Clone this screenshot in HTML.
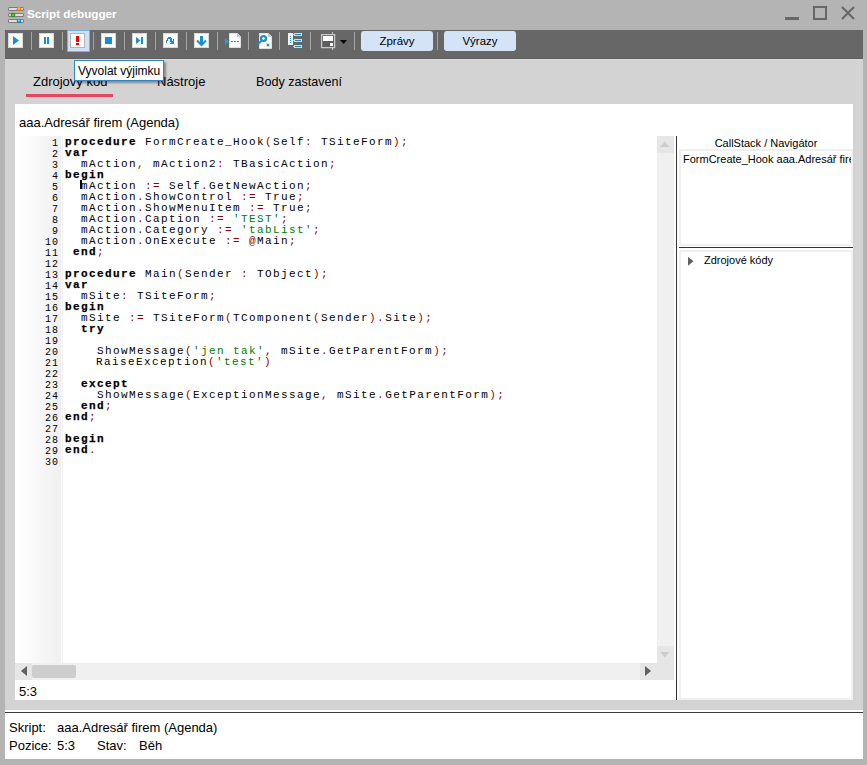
<!DOCTYPE html>
<html><head><meta charset="utf-8">
<style>
*{margin:0;padding:0;box-sizing:border-box}
html,body{width:867px;height:765px;overflow:hidden;background:#b4b4b4;font-family:"Liberation Sans",sans-serif;position:relative}
.a{position:absolute}
.title{left:27px;top:6px;font-size:11.7px;font-weight:bold;color:#fff;line-height:16px}
.tb{left:5px;top:30px;width:858px;height:28px;background:#676767}
.btn{position:absolute;top:3px;width:15px;height:15px;background:#fff;border:1px solid #d8d8d8}
.sep{position:absolute;top:2px;width:1px;height:18px;background:#9a9a9a}
.tbtn{height:20px;width:72px;background:#d4e3f5;border-radius:3px;font-size:11.5px;text-align:center;line-height:21px;color:#000}
.main{left:5px;top:59px;width:858px;height:651px;background:#d3d3d3;border-top:1px solid #d9d9d9}
.tab{position:absolute;font-size:13px;color:#000;top:14px;line-height:16px}
.panel{left:15px;top:104px;width:838px;height:596px;background:#fff}
.code{font-family:"Liberation Mono",monospace;font-size:11px;letter-spacing:1.4px;line-height:11px;white-space:pre;color:#000}
.k{font-weight:bold;-webkit-text-stroke:0.25px #000}
.p{color:#900000}
.s{color:#007a00}
.ln{font-family:"Liberation Mono",monospace;font-size:10px;letter-spacing:1px;line-height:11px;text-align:right;color:#000;white-space:pre}
.status{left:5px;top:713px;width:858px;height:46px;padding-top:1px;background:#fff;font-size:13px;color:#000}
</style></head><body>

<!-- title bar icon -->
<svg class="a" style="left:0;top:0" width="30" height="30">
  <rect x="8" y="7" width="16" height="4" rx="1.5" fill="#7c7c7c"/><rect x="9" y="8" width="14" height="2" fill="#dedede"/>
  <rect x="8" y="13" width="16" height="4" rx="1.5" fill="#7c7c7c"/><rect x="9" y="14" width="14" height="2" fill="#dedede"/>
  <rect x="8" y="19" width="16" height="4" rx="1.5" fill="#7c7c7c"/><rect x="9" y="20" width="14" height="2" fill="#dedede"/>
  <circle cx="19" cy="9" r="2.3" fill="#f07010"/><circle cx="19" cy="8.8" r="1.2" fill="#ffd000"/>
  <circle cx="13" cy="15" r="2.3" fill="#1f8f1f"/><circle cx="13" cy="15" r="1.1" fill="#9ad030"/>
  <circle cx="19" cy="21" r="2.3" fill="#1585d0"/><circle cx="19" cy="20.6" r="1" fill="#a0e0ff"/>
</svg>
<div class="a title">Script debugger</div>

<!-- window controls -->
<div class="a" style="left:785px;top:17px;width:14px;height:3px;background:#676767"></div>
<div class="a" style="left:813px;top:6px;width:14px;height:14px;border:2px solid #676767"></div>
<svg class="a" style="left:841px;top:6px" width="14" height="14" viewBox="0 0 14 14"><path d="M1 1L13 13M13 1L1 13" stroke="#676767" stroke-width="2"/></svg>

<!-- toolbar -->
<svg class="a" style="left:0;top:0" width="867" height="60" shape-rendering="crispEdges">
<rect x="5" y="30" width="858" height="29" fill="#676767"/><rect x="5" y="58" width="858" height="1" fill="#5e5e5e"/>
<rect x="31" y="32" width="1" height="18" fill="#a3a3a3"/>
<rect x="62" y="32" width="1" height="18" fill="#a3a3a3"/>
<rect x="93" y="32" width="1" height="18" fill="#a3a3a3"/>
<rect x="124" y="32" width="1" height="18" fill="#a3a3a3"/>
<rect x="155" y="32" width="1" height="18" fill="#a3a3a3"/>
<rect x="186" y="32" width="1" height="18" fill="#a3a3a3"/>
<rect x="217" y="32" width="1" height="18" fill="#a3a3a3"/>
<rect x="248" y="32" width="1" height="18" fill="#a3a3a3"/>
<rect x="279" y="32" width="1" height="18" fill="#a3a3a3"/>
<rect x="310" y="32" width="1" height="18" fill="#a3a3a3"/>
<rect x="354" y="32" width="1" height="18" fill="#a3a3a3"/>
<rect x="437" y="32" width="1" height="18" fill="#a3a3a3"/>
<rect x="8.5" y="33.5" width="14" height="14" fill="#fff" stroke="#d9d9d9"/>
<path d="M13 36L19 40.5L13 45Z" fill="#1590d0" shape-rendering="geometricPrecision"/>
<rect x="39.5" y="33.5" width="14" height="14" fill="#fff" stroke="#d9d9d9"/>
<rect x="44" y="37" width="2" height="7" fill="#1590d0"/><rect x="47" y="37" width="2" height="7" fill="#1590d0"/>
<rect x="67.5" y="30.5" width="22" height="21" fill="#cfe1f6" stroke="#79aee6"/>
<rect x="70.5" y="33.5" width="14" height="14" fill="#fff" stroke="#b4b4b4"/>
<rect x="76" y="36" width="3" height="6" fill="#f00000"/><rect x="76" y="43" width="3" height="2" fill="#f00000"/>
<rect x="101.5" y="33.5" width="14" height="14" fill="#fff" stroke="#d9d9d9"/>
<rect x="105" y="37" width="7" height="7" fill="#1590d0"/>
<rect x="132.5" y="33.5" width="14" height="14" fill="#fff" stroke="#d9d9d9"/>
<path d="M136 37L140.5 40.5L136 44Z" fill="#1590d0" shape-rendering="geometricPrecision"/><rect x="141" y="37" width="2" height="7" fill="#1590d0"/>
<rect x="163.5" y="33.5" width="14" height="14" fill="#fff" stroke="#d9d9d9"/><rect x="168" y="37" width="1" height="1" fill="#1590d0"/><rect x="169" y="37" width="1" height="1" fill="#1590d0"/><rect x="170" y="37" width="1" height="1" fill="#1590d0"/><rect x="167" y="38" width="1" height="1" fill="#1590d0"/><rect x="168" y="38" width="1" height="1" fill="#1590d0"/><rect x="169" y="38" width="1" height="1" fill="#1590d0"/><rect x="170" y="38" width="1" height="1" fill="#1590d0"/><rect x="171" y="38" width="1" height="1" fill="#1590d0"/><rect x="167" y="39" width="1" height="1" fill="#1590d0"/><rect x="170" y="39" width="1" height="1" fill="#1590d0"/><rect x="171" y="39" width="1" height="1" fill="#1590d0"/><rect x="173" y="39" width="1" height="1" fill="#1590d0"/><rect x="166" y="40" width="1" height="1" fill="#1590d0"/><rect x="167" y="40" width="1" height="1" fill="#1590d0"/><rect x="170" y="40" width="1" height="1" fill="#1590d0"/><rect x="171" y="40" width="1" height="1" fill="#1590d0"/><rect x="173" y="40" width="1" height="1" fill="#1590d0"/><rect x="166" y="41" width="1" height="1" fill="#1590d0"/><rect x="170" y="41" width="1" height="1" fill="#1590d0"/><rect x="171" y="41" width="1" height="1" fill="#1590d0"/><rect x="172" y="41" width="1" height="1" fill="#1590d0"/><rect x="173" y="41" width="1" height="1" fill="#1590d0"/><rect x="166" y="42" width="1" height="1" fill="#1590d0"/><rect x="171" y="42" width="1" height="1" fill="#1590d0"/><rect x="172" y="42" width="1" height="1" fill="#1590d0"/><rect x="173" y="42" width="1" height="1" fill="#1590d0"/><rect x="170" y="43" width="1" height="1" fill="#1590d0"/><rect x="171" y="43" width="1" height="1" fill="#1590d0"/><rect x="172" y="43" width="1" height="1" fill="#1590d0"/><rect x="173" y="43" width="1" height="1" fill="#1590d0"/>






























<rect x="194.5" y="33.5" width="14" height="14" fill="#fff" stroke="#d9d9d9"/>
<rect x="200" y="36" width="3" height="9" fill="#1590d0"/><path d="M197 40.5L201.5 45L206 40.5" stroke="#1590d0" stroke-width="2" fill="none" shape-rendering="geometricPrecision"/>
<path d="M229.5 33.5H237.5L240.5 36.5V47.5H229.5Z" fill="#fff" stroke="#e0e0e0" shape-rendering="geometricPrecision"/>
<path d="M237 33L241 37H237Z" fill="#c8c8c8" shape-rendering="geometricPrecision"/>
<path d="M225 38L229 41.5L225 45Z" fill="#18a0e0" shape-rendering="geometricPrecision"/>
<rect x="231" y="41" width="2" height="1" fill="#1590d0"/><rect x="234" y="41" width="2" height="1" fill="#1590d0"/><rect x="237" y="41" width="2" height="1" fill="#1590d0"/>
<path d="M259.5 33.5H268.5L271.5 36.5V48.5H259.5Z" fill="#fff" stroke="#e0e0e0" shape-rendering="geometricPrecision"/>
<path d="M268 33L272 37H268Z" fill="#c8c8c8" shape-rendering="geometricPrecision"/>
<circle cx="263.5" cy="38.5" r="2.4" fill="none" stroke="#1590d0" stroke-width="2.4" shape-rendering="geometricPrecision"/><path d="M263.5 37.3V39.7M262.3 38.5H264.7" stroke="#fff" stroke-width="0.9" shape-rendering="geometricPrecision"/>
<path d="M261.5 41L257.5 44.5" stroke="#1590d0" stroke-width="1.8" shape-rendering="geometricPrecision"/>
<rect x="266" y="43" width="4" height="4" fill="#ddd"/><rect x="267" y="44" width="2" height="2" fill="#1590d0"/>
<rect x="288" y="33" width="5" height="12" fill="#f4f4f4"/>
<rect x="290" y="36" width="1" height="1" fill="#1590d0"/>
<rect x="290" y="38" width="1" height="1" fill="#1590d0"/>
<rect x="290" y="40" width="1" height="1" fill="#1590d0"/>
<rect x="290" y="42" width="1" height="1" fill="#1590d0"/>
<rect x="293" y="34" width="1" height="1" fill="#ccc"/><rect x="293" y="40" width="1" height="1" fill="#ccc"/><rect x="293" y="46" width="1" height="1" fill="#ccc"/>
<rect x="294" y="33" width="8" height="3" fill="#d8d8d8"/><rect x="295" y="34" width="6" height="1" fill="#1590d0"/>
<rect x="294" y="39" width="8" height="3" fill="#d8d8d8"/><rect x="295" y="40" width="6" height="1" fill="#1590d0"/>
<rect x="294" y="45" width="8" height="3" fill="#d8d8d8"/><rect x="295" y="46" width="6" height="1" fill="#1590d0"/>
<rect x="321.6" y="34.6" width="13" height="13" fill="#5c5c5c" stroke="#c8c8c8" stroke-width="1.3" shape-rendering="geometricPrecision"/>
<rect x="323" y="36" width="10" height="5" fill="#fff"/><rect x="330" y="43" width="3" height="3" fill="#fff"/>
<rect x="332" y="32" width="1" height="2" fill="#c8c8c8"/><rect x="332" y="48" width="1" height="2" fill="#c8c8c8"/>
<path d="M340 40H347L343.5 44Z" fill="#000" shape-rendering="geometricPrecision"/>
</svg>
<div class="a tbtn" style="left:361px;top:31px">Zprávy</div>
<div class="a tbtn" style="left:444px;top:31px">Výrazy</div>
<!-- main -->
<div class="a main">
  <div class="tab" style="left:28px">Zdrojový kód</div>
  <div class="a" style="left:21px;top:34px;width:87px;height:3px;background:#e8455e"></div>
  <div class="tab" style="left:152px">Nástroje</div>
  <div class="tab" style="left:251px;font-size:12.6px">Body zastavení</div>
</div>

<div class="a panel">
  <div class="a" style="left:4px;top:11px;font-size:13px;line-height:16px">aaa.Adresář firem (Agenda)</div>
</div>


<!-- editor -->
<div class="a" style="left:16px;top:136px;width:641px;height:527px;background:#fff;overflow:hidden">
  <div class="a" style="left:0;top:0;width:45px;height:527px;background:linear-gradient(to right,#fff,#f0f0f0)"></div>
  <div class="a" style="left:45px;top:0;width:1px;height:527px;background:#fafafa"></div>
  <div class="a" style="left:46px;top:0;width:1px;height:527px;background:#f2f2f2"></div>
  <div class="a ln" style="left:0;top:2px;width:43px">1
2
3
4
5
6
7
8
9
10
11
12
13
14
15
16
17
18
19
20
21
22
23
24
25
26
27
28
29
30</div>
  <div class="a code" style="left:49px;top:1px"><span class="k">procedure</span> FormCreate_Hook<span class="p">(</span>Self<span class="p">:</span> TSiteForm<span class="p">);</span>
<span class="k">var</span>
  mAction<span class="p">,</span> mAction2<span class="p">:</span> TBasicAction<span class="p">;</span>
<span class="k">begin</span>
  mAction <span class="p">:=</span> Self<span class="p">.</span>GetNewAction<span class="p">;</span>
  mAction<span class="p">.</span>ShowControl <span class="p">:=</span> True<span class="p">;</span>
  mAction<span class="p">.</span>ShowMenuItem <span class="p">:=</span> True<span class="p">;</span>
  mAction<span class="p">.</span>Caption <span class="p">:=</span> <span class="s">'TEST'</span><span class="p">;</span>
  mAction<span class="p">.</span>Category <span class="p">:=</span> <span class="s">'tabList'</span><span class="p">;</span>
  mAction<span class="p">.</span>OnExecute <span class="p">:=</span> <span class="p">@</span>Main<span class="p">;</span>
 <span class="k">end</span><span class="p">;</span>

<span class="k">procedure</span> Main<span class="p">(</span>Sender <span class="p">:</span> TObject<span class="p">);</span>
<span class="k">var</span>
  mSite<span class="p">:</span> TSiteForm<span class="p">;</span>
<span class="k">begin</span>
  mSite <span class="p">:=</span> TSiteForm<span class="p">(</span>TComponent<span class="p">(</span>Sender<span class="p">).</span>Site<span class="p">);</span>
  <span class="k">try</span>

    ShowMessage<span class="p">(</span><span class="s">'jen tak'</span><span class="p">,</span> mSite<span class="p">.</span>GetParentForm<span class="p">);</span>
<span style="margin-left:-1px">    RaiseException</span><span class="p">(</span><span class="s">'test'</span><span class="p">)</span>

  <span class="k">except</span>
    ShowMessage<span class="p">(</span>ExceptionMessage<span class="p">,</span> mSite<span class="p">.</span>GetParentForm<span class="p">);</span>
  <span class="k">end</span><span class="p">;</span>
<span class="k">end</span><span class="p">;</span>

<span class="k">begin</span>
<span class="k">end</span><span class="p">.</span>
</div>
  <div class="a" style="left:64px;top:44px;width:2px;height:9px;background:#000"></div>
</div>


<!-- vertical scrollbar -->
<div class="a" style="left:657px;top:136px;width:17px;height:527px;background:#f0f0f0"></div>
<div class="a" style="left:657px;top:136px;width:17px;height:17px;background:#e6e6e6"></div>
<svg class="a" style="left:657px;top:136px" width="17" height="17"><path d="M3.3 11L12.3 11L7.8 5.5Z" fill="#cdcdcd"/></svg>
<div class="a" style="left:657px;top:646px;width:17px;height:17px;background:#e6e6e6"></div>
<svg class="a" style="left:657px;top:646px" width="17" height="17"><path d="M3.3 6L12.3 6L7.8 11.5Z" fill="#cdcdcd"/></svg>
<!-- horizontal scrollbar -->
<div class="a" style="left:15px;top:663px;width:642px;height:17px;background:#f0f0f0"></div>
<div class="a" style="left:15px;top:663px;width:17px;height:17px;background:#e6e6e6"></div>
<svg class="a" style="left:15px;top:663px" width="17" height="17"><path d="M12 3L6 8L12 13Z" fill="#606060"/></svg>
<div class="a" style="left:32px;top:665px;width:44px;height:13px;background:#cdcdcd;border-radius:2px"></div>
<div class="a" style="left:640px;top:663px;width:17px;height:17px;background:#e6e6e6"></div>
<svg class="a" style="left:640px;top:663px" width="17" height="17"><path d="M5 3L11 8L5 13Z" fill="#606060"/></svg>
<div class="a" style="left:657px;top:663px;width:17px;height:17px;background:#e6e6e6"></div>
<div class="a" style="left:19px;top:684px;font-size:13px;line-height:16px">5:3</div>

<!-- right panel -->
<div class="a" style="left:676px;top:136px;width:1px;height:564px;background:#333"></div>
<div class="a" style="left:679px;top:135px;width:174px;text-align:center;font-size:11px;line-height:16px">CallStack / Navigátor</div>
<div class="a" style="left:679px;top:149px;width:174px;height:97px;border:2px solid #f0f0f0;overflow:hidden">
  <div class="a" style="left:2px;top:0px;font-size:11px;line-height:16px;white-space:nowrap">FormCreate_Hook aaa.Adresář firem (Agenda)</div>
</div>
<div class="a" style="left:679px;top:247px;width:174px;height:1px;background:#333"></div>
<div class="a" style="left:679px;top:250px;width:174px;height:450px;border:2px solid #f0f0f0">
  <svg class="a" style="left:7px;top:4px" width="8" height="12"><path d="M0 0.8L5.5 5.3L0 9.8Z" fill="#606060"/></svg>
  <div class="a" style="left:23px;top:0px;font-size:11px;line-height:16px;white-space:nowrap">Zdrojové kódy</div>
</div>

<!-- separator above status -->
<div class="a" style="left:5px;top:710px;width:858px;height:2px;background:#fff"></div>
<div class="a" style="left:5px;top:712px;width:858px;height:1px;background:#3a3a3a"></div>

<div class="a status">
  <div class="a" style="left:4px;top:7px;line-height:16px">Skript:</div>
  <div class="a" style="left:52px;top:7px;line-height:16px">aaa.Adresář firem (Agenda)</div>
  <div class="a" style="left:4px;top:25px;line-height:16px">Pozice:</div>
  <div class="a" style="left:52px;top:25px;line-height:16px">5:3</div>
  <div class="a" style="left:92px;top:25px;line-height:16px">Stav:</div>
  <div class="a" style="left:134px;top:25px;line-height:16px">Běh</div>
</div>


<!-- tooltip -->
<div class="a" style="left:74px;top:60px;width:90px;height:21px;background:#fff;border:1px solid #3088c8;box-shadow:2px 2px 2px rgba(0,0,0,0.35);font-size:12px;line-height:18px;padding-top:1px;padding-left:3px;white-space:nowrap">Vyvolat výjimku</div>
</body></html>
